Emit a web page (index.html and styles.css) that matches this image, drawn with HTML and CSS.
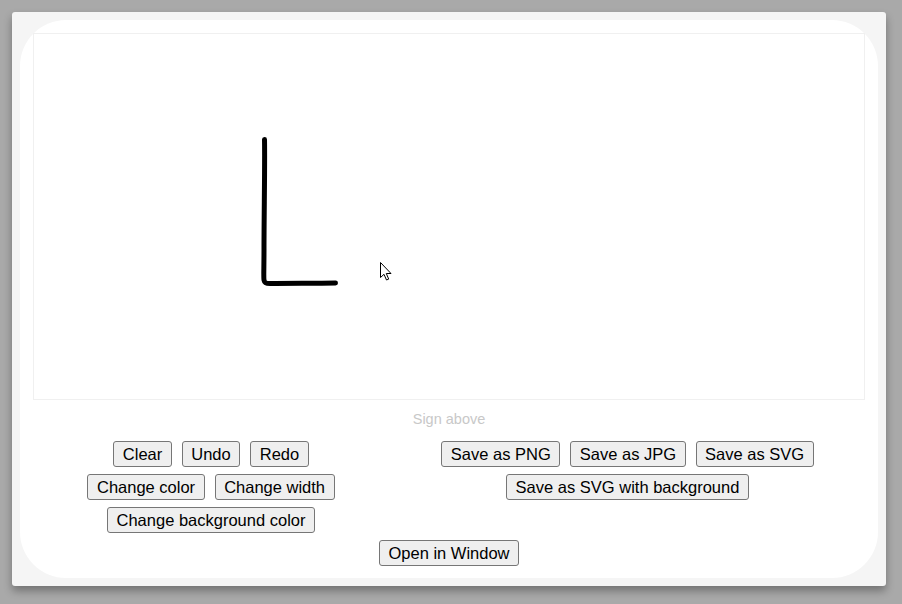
FILE: index.html
```html
<!DOCTYPE html>
<html>
<head>
<meta charset="utf-8">
<link rel="stylesheet" href="styles.css">
</head>
<body>
<div class="panel">
  <div class="card">
    <div class="pad">
      <svg class="drawing" width="831" height="365" viewBox="0 0 831 365">
        <path d="M230.5 105.5 C231 130 230 180 230 215 C230 235 229.5 244 230 246 C230.5 249 232 249.5 236 249.5 C255 249 280 249.5 301.5 249" fill="none" stroke="#000" stroke-width="5" stroke-linecap="round" stroke-linejoin="round"/>
        <path transform="translate(346.5 228.5)" d="M0 0 L0 15 L3.5 11.8 L6 17.5 L8.2 16.6 L5.8 11 L10.5 11 Z" fill="#fff" stroke="#000" stroke-width="1" stroke-linejoin="miter"/>
      </svg>
    </div>
    <div class="hint">Sign above</div>
    <div class="controls">
      <div class="col">
        <div class="row">
          <button class="btn">Clear</button>
          <button class="btn">Undo</button>
          <button class="btn">Redo</button>
        </div>
        <div class="row">
          <button class="btn">Change color</button>
          <button class="btn">Change width</button>
        </div>
        <div class="row">
          <button class="btn">Change background color</button>
        </div>
      </div>
      <div class="col">
        <div class="row">
          <button class="btn">Save as PNG</button>
          <button class="btn">Save as JPG</button>
          <button class="btn">Save as SVG</button>
        </div>
        <div class="row">
          <button class="btn">Save as SVG with background</button>
        </div>
      </div>
    </div>
    <div class="bottom">
      <button class="btn">Open in Window</button>
    </div>
  </div>
</div>
</body>
</html>
```

FILE: styles.css
```css
html, body {
  margin: 0;
  padding: 0;
}
body {
  background: #a9a9a9;
  width: 902px;
  height: 604px;
  overflow: hidden;
  font-family: "Liberation Sans", Arial, sans-serif;
}
.panel {
  margin: 12px 0 0 12px;
  width: 874px;
  height: 574px;
  box-sizing: border-box;
  padding: 8px;
  background: #f5f5f5;
  border-radius: 3px;
  box-shadow: 0 5px 9px rgba(0, 0, 0, 0.32);
}
.card {
  background: #fff;
  border-radius: 46px;
  height: 558px;
  box-sizing: border-box;
  padding: 13px;
}
.pad {
  height: 367px;
  box-sizing: border-box;
  border: 1px solid #f0f0f0;
}
.drawing {
  display: block;
}
.hint {
  margin-top: 11px;
  text-align: center;
  font-size: 14.5px;
  line-height: 16px;
  color: #c8c8c8;
}
.controls {
  margin-top: 14px;
  display: grid;
  grid-template-columns: 356px 477px;
}
.col {
  display: flex;
  flex-direction: column;
  gap: 7px;
}
.row {
  display: flex;
  justify-content: center;
  gap: 10px;
}
.btn {
  font-family: "Liberation Sans", Arial, sans-serif;
  font-size: 16.5px;
  line-height: 18px;
  color: #000;
  background: #efefef;
  border: 1px solid #767676;
  border-radius: 3px;
  padding: 3px 8.5px;
  margin: 0;
}
.bottom {
  margin-top: 7px;
  display: flex;
  justify-content: center;
}
```
